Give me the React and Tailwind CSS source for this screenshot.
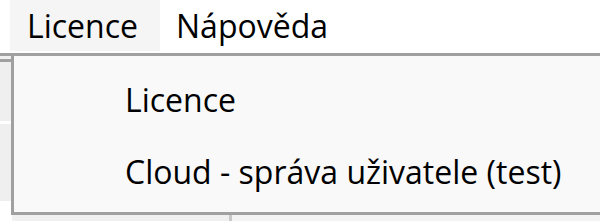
import React from 'react';

const font = { fontFamily: '"Open Sans", "Noto Sans", sans-serif' };

const MenuItem = ({ label }) => (
  <div className="h-[72px] leading-[72px] pl-[111px] pr-8 whitespace-nowrap text-black">
    {label}
  </div>
);

export default function App() {
  return (
    <div className="relative w-[600px] h-[221px] overflow-hidden bg-white text-[32px]" style={font}>
      {/* menu bar */}
      <div className="flex h-[53px] bg-white text-black">
        <div className="ml-[10px] w-[150px] h-[51px] leading-[52px] pl-[17px] bg-[#f5f5f5]">Licence</div>
        <div className="h-[51px] leading-[52px] pl-[16px]">Nápověda</div>
      </div>
      <div className="h-[3px] bg-[#a0a0a0]" />

      {/* window content behind the dropdown */}
      <div className="flex h-[165px]">
        <div className="w-[12px] flex flex-col">
          <div className="h-[3px] bg-[#f0f0f0]" />
          <div className="h-[3px] bg-[#a0a0a0]" />
          <div className="h-[59px] bg-[#efefef]" />
          <div className="h-[3px] bg-white" />
          <div className="h-[77px] bg-[#efefef]" />
          <div className="flex-1 bg-white" />
        </div>
        <div className="flex-1 flex flex-col">
          <div className="flex-1 bg-white" />
          <div className="h-[8px] flex">
            <div className="w-[217px] bg-[#f0f0f0]" />
            <div className="w-[3px] bg-[#c8c8c8]" />
            <div className="flex-1 bg-[#f3f3f3]" />
          </div>
        </div>
      </div>

      {/* dropdown */}
      <div className="absolute left-[11px] top-[53px] right-[-10px] h-[162px] border-[3px] border-[#a0a0a0] bg-[#f9f9f9] pt-[8px]">
        <MenuItem label="Licence" />
        <MenuItem label="Cloud - správa uživatele (test)" />
      </div>
    </div>
  );
}
